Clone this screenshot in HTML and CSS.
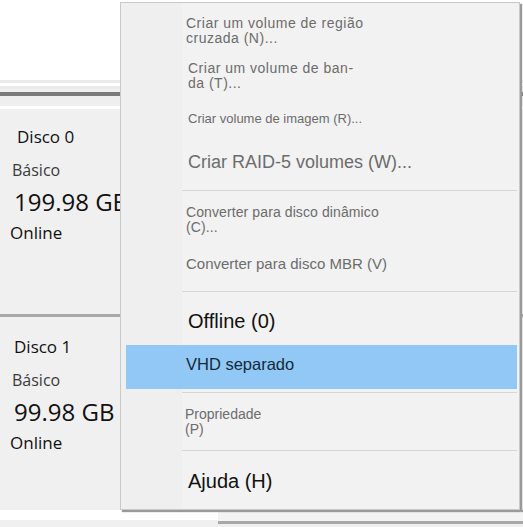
FILE: index.html
```html
<!DOCTYPE html>
<html lang="pt">
<head>
    <meta charset="UTF-8">
    <title>Gerenciamento de disco</title>
    <link rel="stylesheet" href="styles.css">
</head>
<body>
    <div class="top-pane"></div>
    <div class="splitter">
        <div class="line light"></div>
        <div class="line white"></div>
        <div class="line light"></div>
        <div class="line dark"></div>
        <div class="line soft"></div>
    </div>
    <div class="disk">
        <div class="disk-name">Disco 0</div>
        <div class="disk-type">Básico</div>
        <div class="disk-size">199.98 GB</div>
        <div class="disk-state">Online</div>
    </div>
    <div class="disk-sep"></div>
    <div class="disk second">
        <div class="disk-name">Disco 1</div>
        <div class="disk-type">Básico</div>
        <div class="disk-size">99.98 GB</div>
        <div class="disk-state">Online</div>
    </div>
    <div class="bottom-pane">
        <div class="bottom-box"></div>
    </div>

    <div class="context-menu">
        <div class="item i1 small">Criar um volume de região<br>cruzada (N)...</div>
        <div class="item i2 small">Criar um volume de ban-<br>da (T)...</div>
        <div class="item i3 tiny">Criar volume de imagem (R)...</div>
        <div class="item i4 big">Criar RAID-5 volumes (W)...</div>
        <div class="sep"></div>
        <div class="item i5 small">Converter para disco dinâmico<br>(C)...</div>
        <div class="item i6 mid">Converter para disco MBR (V)</div>
        <div class="sep"></div>
        <div class="item i7 large enabled">Offline (0)</div>
        <div class="item i8 active">VHD separado</div>
        <div class="sep after-active"></div>
        <div class="item i9 small">Propriedade<br>(P)</div>
        <div class="sep"></div>
        <div class="item i10 large enabled">Ajuda (H)</div>
    </div>
</body>
</html>
```

FILE: styles.css
```css
* { box-sizing: border-box; }
body { margin: 0; background-color: #f0f0f0; font-family: "Liberation Sans", Arial, sans-serif; overflow: hidden; height: 527px; position: relative; }
.top-pane { height: 80px; background-color: #fff; }
.splitter { display: flex; flex-direction: column; }
.line { height: 3px; }
.line.light { background-color: #ebebeb; }
.line.white { background-color: #fff; }
.line.dark { height: 4px; margin-top: 3px; background-color: #7b7b7b; }
.line.soft { height: 13px; background-color: #efefef; border-bottom: 3px solid #fff; }

.disk { height: 205px; padding-left: 12px; color: #111; font-family: "Open Sans", "Noto Sans", sans-serif; }
.disk-name { font-size: 17px; padding: 17px 0 0 5px; line-height: 22px; }
.disk-type { font-size: 16px; line-height: 22px; margin-top: 11px; color: #3a3a3a; }
.disk-size { font-size: 24px; line-height: 30px; margin-top: 6px; padding-left: 2px; }
.disk-state { font-size: 17px; line-height: 22px; margin-top: 5px; margin-left: -2px; }
.disk-sep { height: 3px; background-color: #a9a9a9; }
.disk.second { height: 205px; }
.disk.second .disk-name { padding: 19px 0 0 2px; }

.bottom-pane { height: 10px; background-color: #fff; position: relative; }
.bottom-box { margin-left: 218px; height: 14px; margin-top: -12px; border-top: 2px solid #a0a0a0; border-bottom: 3px solid #a8a8a8; background-color: #f3f3f3; }

.context-menu { position: absolute; top: 2px; left: 120px; width: 400px; height: 508px; border: 1px solid #c9c9c9; box-shadow: 2px 2px 1px #9a9a9a; display: flex; flex-direction: column; padding-top: 1px; background-color: #f0f0f0; background-image: linear-gradient(to right, #efefef 61px, #f2f2f2 61px); }
.item { display: flex; align-items: center; padding-left: 65px; color: #6c6c6c; white-space: nowrap; flex-shrink: 0; }
.item.small { font-size: 14px; line-height: 15px; }
.item.tiny { font-size: 13px; }
.item.mid { font-size: 15px; line-height: 15px; }
.item.big { font-size: 18px; }
.item.large { font-size: 20px; }
.item.enabled { color: #111; }
.i1 { height: 47px; padding-top: 6px; letter-spacing: 0.5px; }
.i2 { height: 50px; padding-left: 67px; letter-spacing: 0.5px; }
.i3 { height: 35px; padding-left: 67px; }
.i4 { height: 53px; padding-left: 67px; }
.i5 { height: 50px; padding-top: 3px; line-height: 14px; letter-spacing: 0.1px; }
.i6 { height: 47px; padding-bottom: 6px; font-size: 16px; }
.i7 { height: 51px; padding-top: 4px; padding-left: 67px; }
.i8 { height: 44px; padding-bottom: 5px; margin-left: 5px; padding-left: 60px; margin-right: 2px; background-color: #91c8f6; color: #15283a; font-size: 16.5px; }
.i9 { height: 54px; padding-left: 64px; font-size: 14.3px; }
.i10 { height: 57px; padding-left: 67px; }
.sep { height: 1px; margin: 1px 2px 2px 61px; background-color: #d6d6d6; flex-shrink: 0; }
.sep.after-active { margin-top: 3px; }
```
